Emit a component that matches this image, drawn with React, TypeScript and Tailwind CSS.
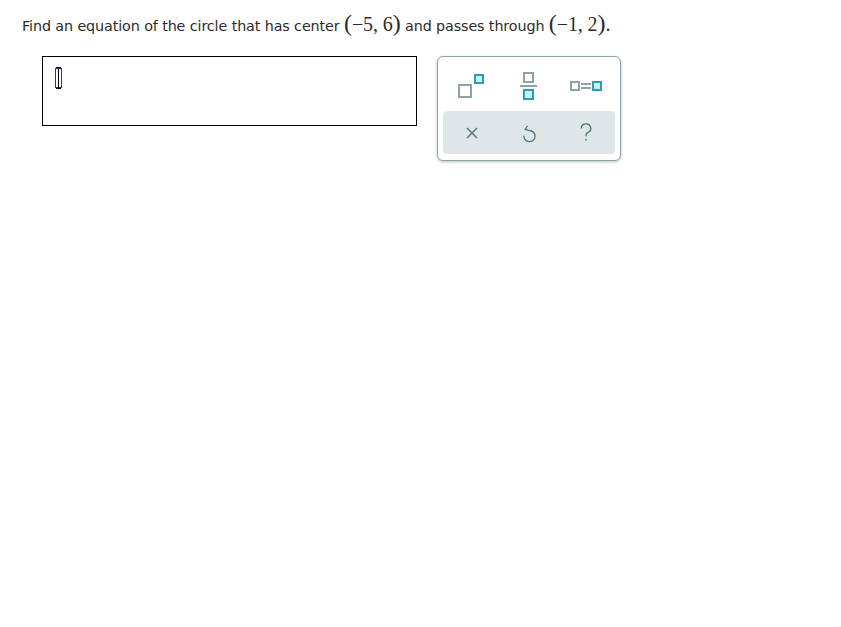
import React from "react";

function Sq({ kind, size }: { kind: "gray" | "teal"; size: number }) {
  return (
    <span
      className={
        kind === "gray"
          ? "inline-block border-2 border-[#8ea1a6] bg-white"
          : "inline-block border-2 border-[#2a9fb0] bg-[#c9eff3]"
      }
      style={{ width: size, height: size }}
    />
  );
}

function Toolbar() {
  return (
    <div className="w-[184px] h-[105px] rounded-[6px] border border-[#8ba3a9] bg-white shadow-[0_1px_3px_rgba(0,0,0,0.25)] px-[5px] pt-[4px]">
      <div className="flex h-[50px] items-center">
        {/* superscript */}
        <div className="flex w-[57px] justify-center">
          <div className="relative w-[26px] h-[24px] -ml-[2px]">
            <span className="absolute left-0 bottom-0 w-[14px] h-[14px] border-2 border-[#8ea1a6] bg-white" />
            <span className="absolute left-[16px] top-0 w-[10px] h-[10px] border-2 border-[#2a9fb0] bg-[#c9eff3]" />
          </div>
        </div>
        {/* fraction */}
        <div className="flex w-[57px] flex-col items-center gap-[2px]">
          <Sq kind="gray" size={11} />
          <span className="block w-[17px] h-[2px] bg-[#8ea1a6]" />
          <Sq kind="teal" size={11} />
        </div>
        {/* equals */}
        <div className="flex w-[57px] items-center justify-center gap-[1px]">
          <Sq kind="gray" size={10} />
          <span className="flex flex-col gap-[2px]">
            <span className="block w-[10px] h-[2px] bg-[#8ea1a6]" />
            <span className="block w-[10px] h-[2px] bg-[#8ea1a6]" />
          </span>
          <Sq kind="teal" size={10} />
        </div>
      </div>
      <div className="flex h-[43px] items-center rounded-[4px] bg-[#dfe6e8] text-[#4d7178]">
        <div className="flex w-[57px] justify-center">
          <svg width="14" height="14" viewBox="0 0 14 14" fill="none" stroke="currentColor" strokeWidth="1.4">
            <path d="M2 2 L12 12 M12 2 L2 12" />
          </svg>
        </div>
        <div className="flex w-[57px] justify-center">
          <svg width="16" height="20" viewBox="0 0 16 20" fill="none" stroke="currentColor" strokeWidth="1.3">
            <path d="M8.5 7.5 A5.6 5.6 0 1 1 2.9 12.6" />
            <path d="M6.6 3 L4.2 6.4 L8.4 7.6" />
          </svg>
        </div>
        <div className="flex w-[57px] justify-center">
          <svg width="14" height="19" viewBox="0 0 14 19" fill="none" stroke="currentColor" strokeWidth="1.3">
            <path d="M2.3 5.5 A4.7 4.5 0 1 1 8.6 9.6 C7.2 10.4 7 11.2 7 13.2" />
            <circle cx="7" cy="16.8" r="0.9" fill="currentColor" stroke="none" />
          </svg>
        </div>
      </div>
    </div>
  );
}

export default function App() {
  return (
    <div className="min-h-[627px] bg-white px-[22px] pt-[12px] font-['DejaVu_Sans',Verdana,sans-serif] text-[14.3px] text-[#2b2b2b]">
      <p className="flex items-baseline leading-[22px] tracking-[-0.1px]">
        <span>Find an equation of the circle that has center&nbsp;</span>
        <span className="font-['Liberation_Serif',serif] text-[20px]">
          <span className="text-[24px]">(</span>−5, 6<span className="text-[24px]">)</span>
        </span>
        <span>&nbsp;and passes through&nbsp;</span>
        <span className="font-['Liberation_Serif',serif] text-[20px]">
          <span className="text-[24px]">(</span>−1, 2<span className="text-[24px]">)</span>.
        </span>
      </p>
      <div className="mt-[19px] ml-[20px] flex items-start gap-[20px]">
        <div className="w-[375px] h-[70px] border border-black px-[12px] pt-[10px]">
          <div className="relative w-[8px] h-[22px]">
            <span className="absolute left-0 top-[1px] w-[7px] h-[20px] border border-[#1a2bd6]" />
            <span className="absolute left-[3px] top-0 w-[1px] h-[22px] bg-black" />
            <span className="absolute left-[1px] top-0 w-[5px] h-[1px] bg-black" />
            <span className="absolute left-[1px] bottom-0 w-[5px] h-[1px] bg-black" />
          </div>
        </div>
        <Toolbar />
      </div>
    </div>
  );
}
